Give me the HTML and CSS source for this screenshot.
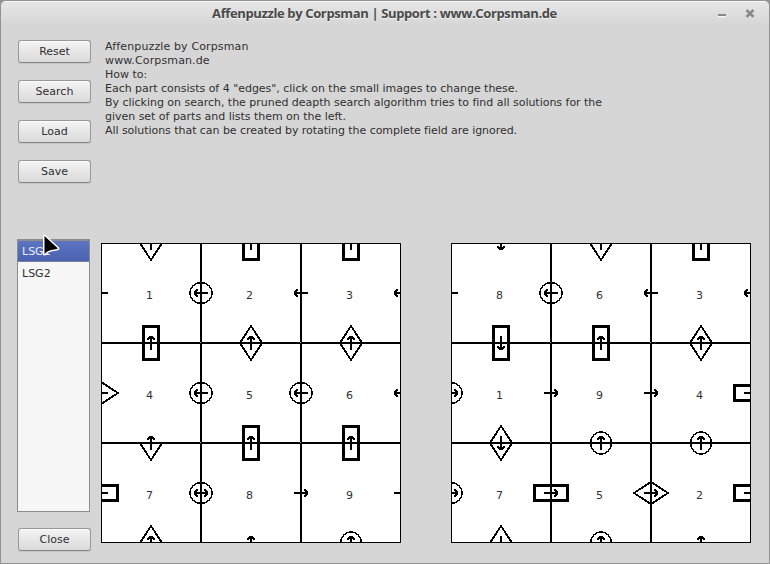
FILE: index.html
```html
<!DOCTYPE html>
<html lang="en">
<head>
<meta charset="utf-8">
<title>Affenpuzzle by Corpsman</title>
<link rel="stylesheet" href="styles.css">
</head>
<body>
<svg class="defs" aria-hidden="true">
  <defs>
    <g id="up"><path class="thick" d="M0 -6V7"/><path class="head" d="M-1 -7H1L4.400 -4V-2.600H3L0 -5L-3 -2.600H-4.400V-4Z"/></g>
    <g id="down"><use href="#up" transform="rotate(180)"/></g>
    <g id="left"><use href="#up" transform="rotate(-90)"/></g>
    <g id="right"><use href="#up" transform="rotate(90)"/></g>
    <rect id="box" class="heavy" x="-7.5" y="-16.5" width="15" height="33"/>
    <rect id="boxh" class="heavy" x="-16.5" y="-7.5" width="33" height="15"/>
    <path id="dia" class="thin" d="M0 -17L10.5 -1V1L0 17L-10.5 1V-1Z"/>
    <path id="diah" class="thin" d="M-17 0L-1 -10.5H1L17 0L1 10.5H-1Z"/>
    <ellipse id="ring" class="round" rx="10.4" ry="11"/>
    <ellipse id="ringh" class="round" rx="11" ry="10.4"/>
    <g id="grid">
      <path class="thick" d="M100 0V300M200 0V300M0 100H300M0 200H300"/>
      <path class="cross" d="M99 99h1v1h-1zM199 99h1v1h-1zM99 199h1v1h-1zM199 199h1v1h-1z"/>
    </g>
    <rect id="frame" class="frame" x=".5" y=".5" width="299" height="299"/>
  </defs>
</svg>
<div class="window">
  <header class="titlebar">
    <h1 class="title">Affenpuzzle by Corpsman | Support : www.Corpsman.de</h1>
    <div class="controls">
      <svg width="10" height="12" viewBox="0 0 10 12"><path class="shine" d="M1 8.5H9"/><path class="ctl" d="M1 7H9"/></svg>
      <svg width="10" height="12" viewBox="0 0 10 12"><path class="shine" d="M1.5 3L8.5 10M8.5 3L1.5 10"/><path class="ctl x" d="M1.5 2L8.5 9M8.5 2L1.5 9"/></svg>
    </div>
  </header>
  <main class="content">
    <aside class="side">
      <div class="buttons">
        <button class="btn">Reset</button>
        <button class="btn">Search</button>
        <button class="btn">Load</button>
        <button class="btn">Save</button>
      </div>
      <ul class="list">
        <li class="item selected">LSG1</li>
        <li class="item">LSG2</li>
      </ul>
      <button class="btn">Close</button>
    </aside>
    <section class="main">
      <p class="help"><span class="wide">Affenpuzzle by Corpsman</span><br><span class="wide">www.Corpsman.de</span><br>How to:<br>Each part consists of 4 "edges", click on the small images to change these.<br>By clicking on search, the pruned deapth search algorithm tries to find all solutions for the<br>given set of parts and lists them on the left.<br><span class="tight">All solutions that can be created by rotating the complete field are ignored.</span></p>
      <div class="boards">
        <svg class="board" width="300" height="300" viewBox="0 0 300 300">
          <use href="#grid"/>
          <g transform="translate(50 0)"><use href="#dia"/><use href="#up"/></g>
          <g transform="translate(150 0)"><use href="#box"/><use href="#up"/></g>
          <g transform="translate(250 0)"><use href="#box"/><use href="#up"/></g>
          <g transform="translate(0 50)"><use href="#left"/></g>
          <g transform="translate(100 50)"><use href="#ringh"/><use href="#left"/></g>
          <g transform="translate(200 50)"><use href="#left"/></g>
          <g transform="translate(300 50)"><use href="#left"/></g>
          <g transform="translate(50 100)"><use href="#box"/><use href="#up"/></g>
          <g transform="translate(150 100)"><use href="#dia"/><use href="#up"/></g>
          <g transform="translate(250 100)"><use href="#dia"/><use href="#up"/></g>
          <g transform="translate(0 150)"><use href="#diah"/><use href="#left"/></g>
          <g transform="translate(100 150)"><use href="#ringh"/><use href="#left"/></g>
          <g transform="translate(200 150)"><use href="#ringh"/><use href="#left"/></g>
          <g transform="translate(300 150)"><use href="#left"/></g>
          <g transform="translate(50 200)"><path class="thin" d="M-10.5 1L0 17L10.5 1"/><use href="#up"/></g>
          <g transform="translate(150 200)"><use href="#box"/><use href="#up"/></g>
          <g transform="translate(250 200)"><use href="#box"/><use href="#up"/></g>
          <g transform="translate(0 250)"><use href="#boxh"/><use href="#left"/></g>
          <g transform="translate(100 250)"><use href="#ringh"/><use href="#left"/><use href="#right"/></g>
          <g transform="translate(200 250)"><use href="#right"/></g>
          <g transform="translate(300 250)"><use href="#right"/></g>
          <g transform="translate(50 300)"><use href="#dia"/><use href="#up"/></g>
          <g transform="translate(150 300)"><use href="#up"/></g>
          <g transform="translate(250 300)"><use href="#ring"/><use href="#up"/></g>
          <use href="#frame"/>
          <g class="num">
            <text x="45" y="56">1</text><text x="145" y="56">2</text><text x="245" y="56">3</text>
            <text x="45" y="156">4</text><text x="145" y="156">5</text><text x="245" y="156">6</text>
            <text x="45" y="256">7</text><text x="145" y="256">8</text><text x="245" y="256">9</text>
          </g>
        </svg>
        <svg class="board" width="300" height="300" viewBox="0 0 300 300">
          <use href="#grid"/>
          <g transform="translate(50 0)"><use href="#down"/></g>
          <g transform="translate(150 0)"><use href="#dia"/><use href="#up"/></g>
          <g transform="translate(250 0)"><use href="#box"/><use href="#up"/></g>
          <g transform="translate(0 50)"><use href="#left"/></g>
          <g transform="translate(100 50)"><use href="#ringh"/><use href="#left"/></g>
          <g transform="translate(200 50)"><use href="#left"/></g>
          <g transform="translate(300 50)"><use href="#left"/></g>
          <g transform="translate(50 100)"><use href="#box"/><use href="#down"/></g>
          <g transform="translate(150 100)"><use href="#box"/><use href="#up"/></g>
          <g transform="translate(250 100)"><use href="#dia"/><use href="#up"/></g>
          <g transform="translate(0 150)"><use href="#ringh"/><use href="#right"/></g>
          <g transform="translate(100 150)"><use href="#right"/></g>
          <g transform="translate(200 150)"><use href="#right"/></g>
          <g transform="translate(300 150)"><use href="#boxh"/><use href="#right"/></g>
          <g transform="translate(50 200)"><use href="#dia"/><use href="#down"/></g>
          <g transform="translate(150 200)"><use href="#ring"/><use href="#up"/></g>
          <g transform="translate(250 200)"><use href="#ring"/><use href="#up"/></g>
          <g transform="translate(0 250)"><use href="#ringh"/><use href="#right"/></g>
          <g transform="translate(100 250)"><use href="#boxh"/><use href="#right"/></g>
          <g transform="translate(200 250)"><use href="#diah"/><use href="#right"/></g>
          <g transform="translate(300 250)"><use href="#boxh"/><use href="#right"/></g>
          <g transform="translate(50 300)"><use href="#dia"/><use href="#down"/></g>
          <g transform="translate(150 300)"><use href="#ring"/><use href="#up"/></g>
          <g transform="translate(250 300)"><use href="#up"/></g>
          <use href="#frame"/>
          <g class="num">
            <text x="45" y="56">8</text><text x="145" y="56">6</text><text x="245" y="56">3</text>
            <text x="45" y="156">1</text><text x="145" y="156">9</text><text x="245" y="156">4</text>
            <text x="45" y="256">7</text><text x="145" y="256">5</text><text x="245" y="256">2</text>
          </g>
        </svg>
      </div>
    </section>
  </main>
</div>
<svg class="cursor" width="20" height="26" viewBox="0 0 20 26">
  <path d="M2.5 3V21Q5.5 17.5 9 17Q12.5 16.5 16 15.5Z"/>
</svg>
</body>
</html>
```
FILE: styles.css
```css
* { box-sizing: border-box; }
body {
  margin: 0;
  width: 770px;
  height: 564px;
  overflow: hidden;
  background: #929292;
  color: #303030;
  font: 11px/14px "DejaVu Sans", sans-serif;
}
.defs { position: absolute; width: 0; height: 0; }
.window {
  height: 564px;
  border: 1px solid #929292;
  border-radius: 6px 6px 0 0;
  background: #d6d6d6;
  overflow: hidden;
}
.titlebar {
  display: flex;
  align-items: center;
  height: 24px;
  padding-right: 14px;
  border-top: 1px solid #fafafa;
  background: linear-gradient(#e6e6e6, #d6d6d6);
}
.title {
  flex: 1;
  margin: 0;
  padding: 0 0 2px 51px;
  text-align: center;
  font: bold 13px/20px "Open Sans", sans-serif;
  letter-spacing: -0.37px;
  color: #4a4a4a;
  text-shadow: 0 1px #f2f2f2;
  white-space: nowrap;
}
.controls { display: flex; gap: 18px; }
.ctl { stroke: #888; stroke-width: 2; }
.ctl.x { stroke-width: 2.6; }
.shine { stroke: #f4f4f4; stroke-width: 2; }
.content { display: flex; padding: 15px 0 0 16px; }
.side { display: flex; flex-direction: column; width: 74px; }
.buttons {
  display: flex;
  flex-direction: column;
  gap: 17px;
  height: 199px;
}
.btn {
  flex: none;
  width: 73px;
  height: 23px;
  margin: 0 0 0 1px;
  padding: 1px 0 0;
  border: 1px solid #999;
  border-bottom-color: #888;
  border-radius: 3px;
  background: linear-gradient(#f4f4f4, #dadada);
  box-shadow: inset 0 1px #fcfcfc, 0 1px #c4c4c4;
  color: #303030;
  font: inherit;
}
.list {
  width: 73px;
  height: 273px;
  margin: 0 0 16px;
  padding: 0;
  border: 1px solid #8c8c8c;
  border-top-width: 2px;
  background: #f7f7f7;
  list-style: none;
}
.item { height: 21px; padding: 4px 0 0 4px; }
.item.selected {
  height: 21px;
  margin-bottom: 1px;
  border-bottom: 1px solid #7880a0;
  background: linear-gradient(#5c74c2, #4a62b0);
  color: #e8ecf8;
}
.main { padding: 0 0 0 10px; }
.help { height: 203px; margin: 0; padding-left: 4px; white-space: nowrap; letter-spacing: -0.022px; }
.wide { letter-spacing: 0.13px; }
.tight { letter-spacing: -0.048px; }
.boards { display: flex; gap: 50px; }
.board { display: block; background: #fff; overflow: hidden; shape-rendering: crispEdges; fill: none; stroke: #000; }
.frame { stroke-width: 1; }
.thick { stroke: #000; stroke-width: 2; }
.head { fill: #000; stroke: none; }
.heavy { fill: none; stroke: #000; stroke-width: 3; }
.thin { fill: none; stroke: #000; stroke-width: 1.85; }
.round { fill: none; stroke: #000; stroke-width: 1.4; }
.cross { fill: #aaa; stroke: none; }
.num { fill: #303030; stroke: none; }
.cursor { position: absolute; left: 42px; top: 233px; }
.cursor path { fill: #000; stroke: #fff; stroke-width: 3; stroke-linejoin: round; paint-order: stroke; }
```
